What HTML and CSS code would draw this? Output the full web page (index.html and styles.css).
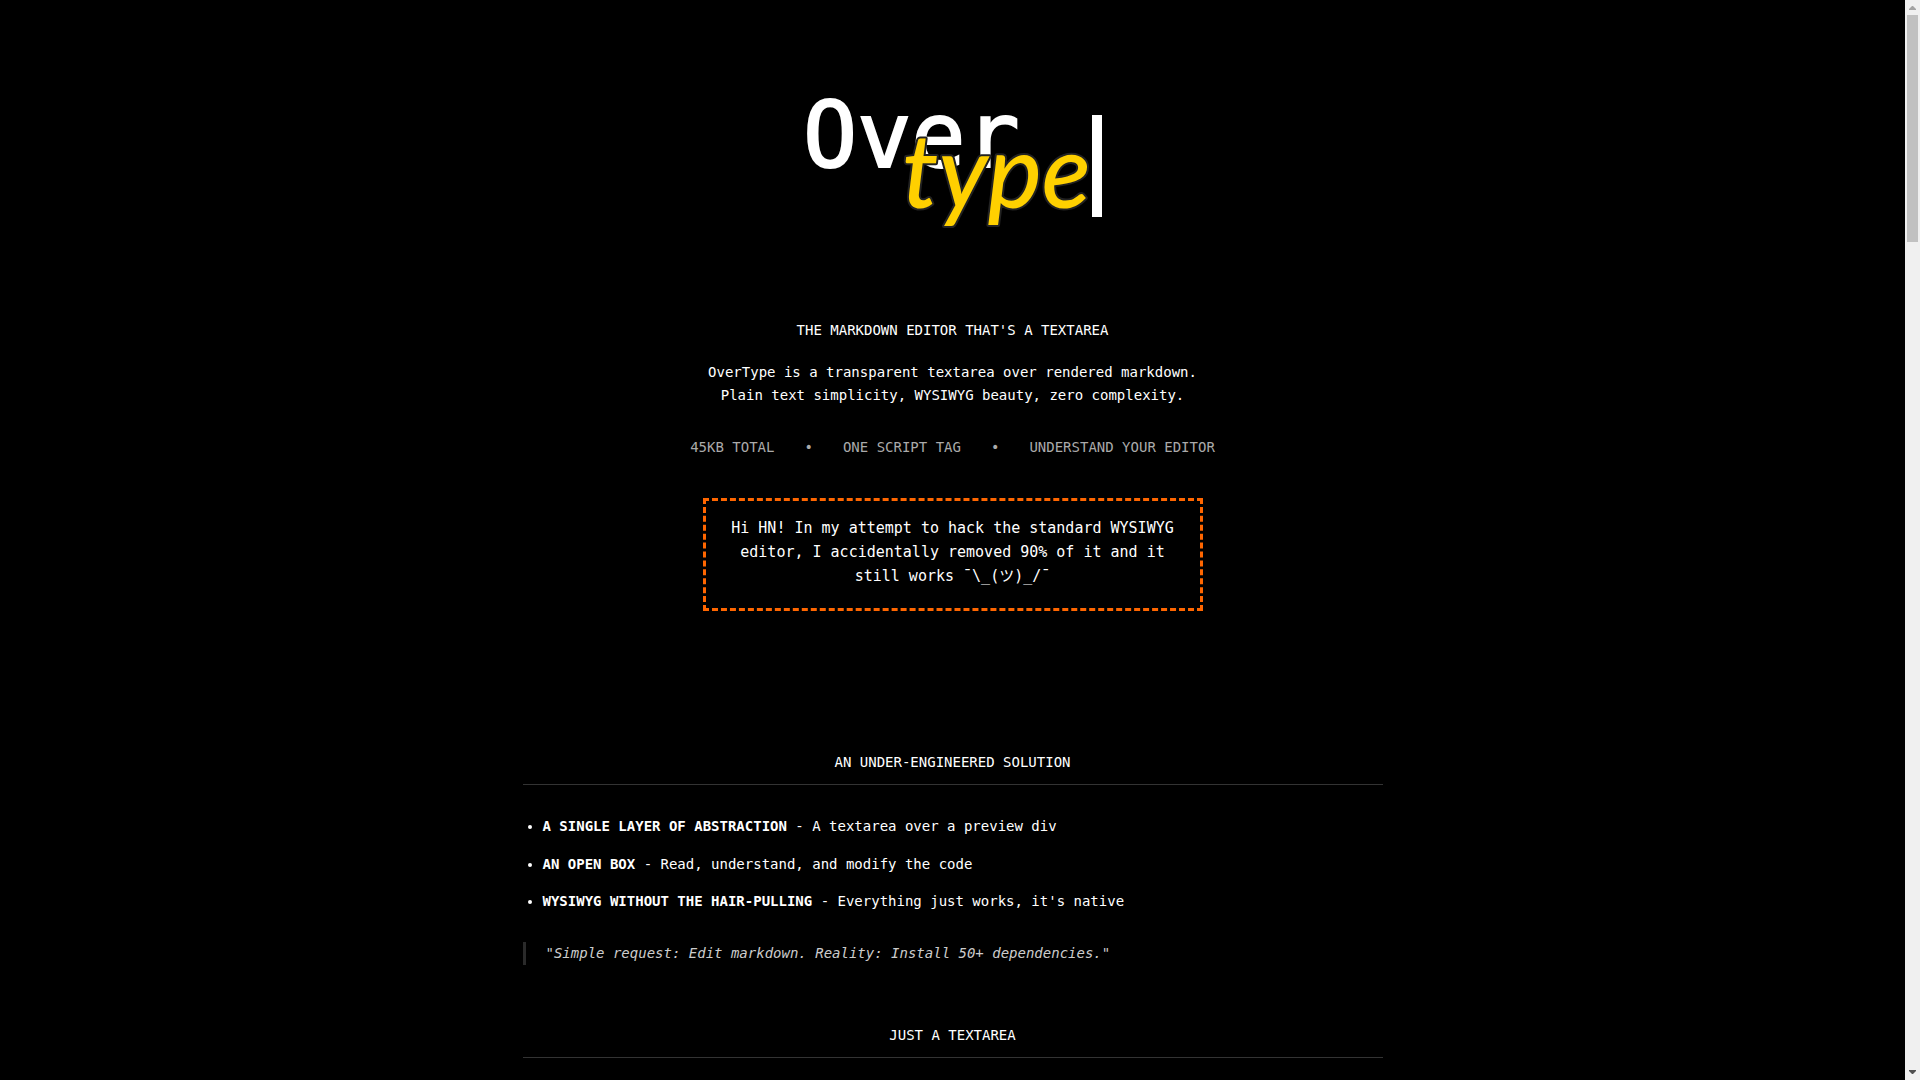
FILE: index.html
```html
<!DOCTYPE html>
<html lang="en">
<head>
    <meta charset="UTF-8">
    <meta name="viewport" content="width=device-width, initial-scale=1.0">
    <title>OverType</title>
    <link rel="stylesheet" href="styles.css">
</head>
<body>
    <main class="page">
        <div class="container">
            <header class="hero">
                <h1 class="logo">
                    <svg width="320" height="200" viewBox="0 0 320 200" role="img" aria-label="OverType">
                        <text class="logo-over" x="10" y="87">Over</text>
                        <text class="logo-type" x="109" y="128">type</text>
                        <rect class="logo-caret" x="299" y="35" width="10" height="102"/>
                    </svg>
                </h1>
                <p class="tagline">THE MARKDOWN EDITOR THAT'S A TEXTAREA</p>
                <p class="intro">OverType is a transparent textarea over rendered markdown.<br>Plain text simplicity, WYSIWYG beauty, zero complexity.</p>
                <div class="features">
                    <span>45KB TOTAL</span>
                    <span>•</span>
                    <span>ONE SCRIPT TAG</span>
                    <span>•</span>
                    <span>UNDERSTAND YOUR EDITOR</span>
                </div>
                <div class="callout">Hi HN! In my attempt to hack the standard WYSIWYG editor, I accidentally removed 90% of it and it still works ¯\_(ツ)_/¯</div>
            </header>

            <section>
                <h2>AN UNDER-ENGINEERED SOLUTION</h2>
                <ul>
                    <li><strong>A SINGLE LAYER OF ABSTRACTION</strong> - A textarea over a preview div</li>
                    <li><strong>AN OPEN BOX</strong> - Read, understand, and modify the code</li>
                    <li><strong>WYSIWYG WITHOUT THE HAIR-PULLING</strong> - Everything just works, it's native</li>
                </ul>
                <blockquote>"Simple request: Edit markdown. Reality: Install 50+ dependencies."</blockquote>
            </section>

            <section>
                <h2>JUST A TEXTAREA</h2>
            </section>
        </div>
    </main>

    <div class="scrollbar" aria-hidden="true">
        <svg class="arrow arrow-up" width="15" height="15" viewBox="0 0 15 15"><path d="M4 10V9L7 6H8L11 9V10Z"/></svg>
        <div class="track"><div class="thumb"></div></div>
        <svg class="arrow arrow-down" width="15" height="15" viewBox="0 0 15 15"><path d="M4 5V6L7 9H8L11 6V5Z"/></svg>
    </div>
</body>
</html>
```
FILE: styles.css
```css
* {
    margin: 0;
    padding: 0;
    box-sizing: border-box;
}

body {
    display: flex;
    height: 100vh;
    font-family: "DejaVu Sans Mono", "Noto Sans CJK JP", monospace;
    font-size: 14px;
    line-height: 1.6;
    background: #000;
    color: #fff;
    overflow: hidden;
}

.page {
    flex: 1;
    min-width: 0;
    overflow-y: auto;
    scrollbar-width: none;
}

.container {
    max-width: 900px;
    margin: 0 auto;
    padding: 80px 20px 0;
}

.hero {
    text-align: center;
    margin-bottom: 140px;
}

/* Logo */
.logo {
    margin-bottom: 39px;
}

.logo svg {
    display: block;
    margin: 0 auto;
}

.logo-over {
    font-family: "DejaVu Sans Mono", monospace;
    font-size: 90px;
    font-weight: 400;
    fill: #fff;
    stroke: #fff;
    stroke-width: 2px;
}

.logo-type {
    font-family: Lato, sans-serif;
    font-size: 102px;
    font-style: italic;
    font-weight: 500;
    fill: #ffd000;
    stroke: #222;
    stroke-width: 4px;
    stroke-linejoin: round;
    paint-order: stroke;
}

.logo-caret {
    fill: #fff;
}

.tagline {
    margin-bottom: 20px;
}

.intro {
    line-height: 23px;
    margin-bottom: 29px;
}

.features {
    display: flex;
    flex-wrap: wrap;
    justify-content: center;
    gap: 30px;
    color: #aaa;
    margin-bottom: 39px;
}

.callout {
    max-width: 500px;
    margin: 0 auto;
    padding: 15px 20px 20px;
    border: 3px dashed #ff6600;
    font-size: 15px;
    line-height: 24px;
}

/* Sections */
section {
    margin-bottom: 59px;
}

h2 {
    font-size: 14px;
    font-weight: 400;
    text-align: center;
    padding-bottom: 11px;
    border-bottom: 1px solid #333;
    margin-bottom: 30px;
}

ul {
    padding-left: 20px;
    margin-bottom: 30px;
}

li {
    margin-bottom: 15px;
}

blockquote {
    border-left: 3px solid #2a2a2a;
    padding-left: 20px;
    color: #ccc;
    font-style: italic;
}

/* Scrollbar */
.scrollbar {
    display: flex;
    flex-direction: column;
    width: 15px;
    background: #f0f0f0;
}

.track {
    flex: 1;
    padding: 0 2px;
}

.thumb {
    height: 21.6%;
    background: #c1c1c1;
}

.arrow {
    display: block;
}

.arrow-up {
    fill: #a3a3a3;
}

.arrow-down {
    fill: #505050;
}
```
